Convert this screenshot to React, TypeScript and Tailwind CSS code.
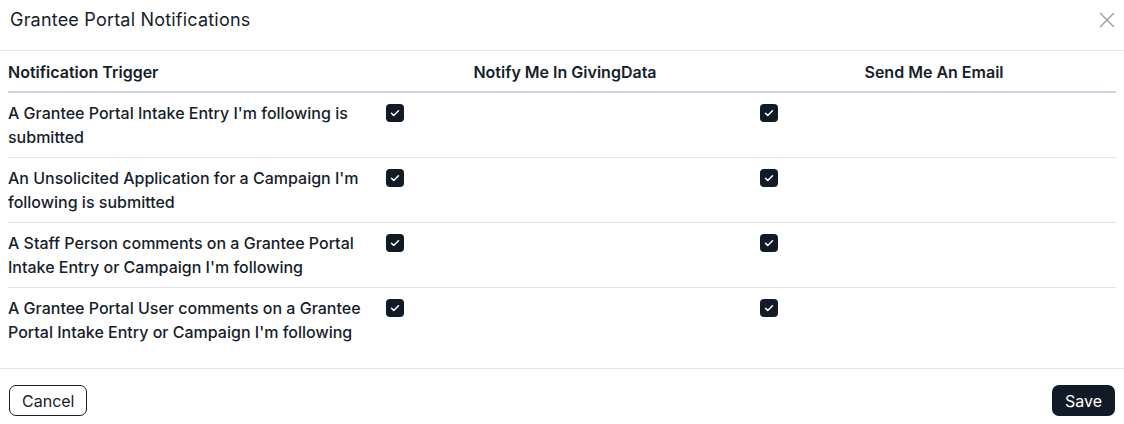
import { X } from 'lucide-react'

const triggers = [
  "A Grantee Portal Intake Entry I'm following is submitted",
  "An Unsolicited Application for a Campaign I'm following is submitted",
  "A Staff Person comments on a Grantee Portal Intake Entry or Campaign I'm following",
  "A Grantee Portal User comments on a Grantee Portal Intake Entry or Campaign I'm following",
]

function Check() {
  return (
    <span className="inline-flex w-[18px] h-[18px] rounded-[4px] bg-[#111b27] items-center justify-center">
      <svg className="w-3 h-3 text-white" viewBox="0 0 24 24" fill="none" stroke="currentColor" strokeWidth={3} strokeLinecap="round" strokeLinejoin="round">
        <path d="M5 12.5l4.5 4.5L19 7.5" />
      </svg>
    </span>
  )
}

export default function App() {
  return (
    <div className="w-[1124px] h-[424px] bg-white text-[#151e2b] font-['Inter',sans-serif] flex flex-col">
      {/* Header */}
      <div className="h-[51px] flex items-start justify-between pl-[10px] pr-[4px] pt-2 border-b border-[#e2e5e9]">
        <h2 className="text-[18px] leading-6 font-normal tracking-[0.2px]">Grantee Portal Notifications</h2>
        <button className="text-[#9aa1a9] -mt-[1px]">
          <X className="w-[26px] h-[26px]" strokeWidth={1.3} />
        </button>
      </div>

      {/* Body */}
      <div className="px-2 pt-2 pb-4 border-b border-[#e2e5e9]">
        <table className="table-fixed w-full border-collapse text-[16px] leading-6 font-medium">
          <colgroup>
            <col className="w-[370px]" />
            <col className="w-[374px]" />
            <col />
          </colgroup>
          <thead>
            <tr className="border-b-2 border-[#cbd5e1]">
              <th className="text-left font-semibold pt-[1px] pb-[7px]">Notification Trigger</th>
              <th className="text-center font-semibold pt-[1px] pb-[7px]">Notify Me In GivingData</th>
              <th className="text-center font-semibold pt-[1px] pb-[7px]">Send Me An Email</th>
            </tr>
          </thead>
          <tbody>
            {triggers.map((t, i) => (
              <tr key={i} className={i < triggers.length - 1 ? 'border-b border-[#dde3ea]' : ''}>
                <td className="align-top py-2 pr-2">{t}</td>
                <td className="align-top pt-[8px] pl-2"><Check /></td>
                <td className="align-top pt-[8px] pl-2"><Check /></td>
              </tr>
            ))}
          </tbody>
        </table>
      </div>

      {/* Footer */}
      <div className="flex justify-between items-start px-[9px] pt-[16px]">
        <button className="h-[31px] px-[12px] rounded-[7px] border border-[#151e2b] text-[16px] text-[#151e2b] bg-white">
          Cancel
        </button>
        <button className="h-[31px] px-[13px] rounded-[7px] bg-[#111b27] text-[16px] text-white">
          Save
        </button>
      </div>
    </div>
  )
}
